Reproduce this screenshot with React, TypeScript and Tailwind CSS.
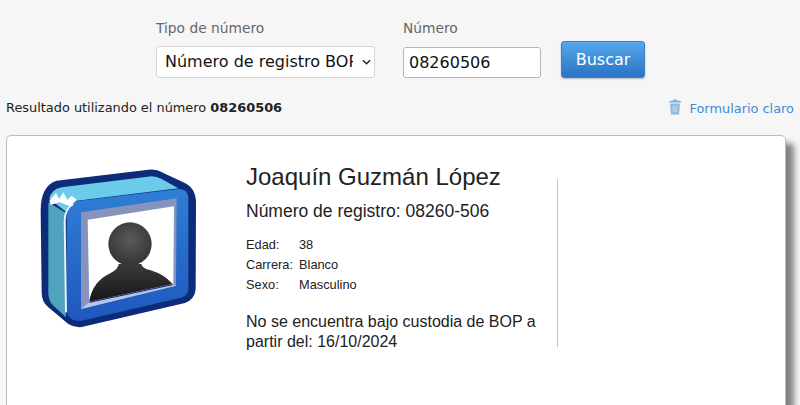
function InmateIcon() {
  return (
    <svg viewBox="0 0 600 600" className="w-[200px] h-[200px] shrink-0">
      <defs>
        <linearGradient id="front" x1="0" y1="0" x2="0" y2="1">
          <stop offset="0" stopColor="#2f7ed6" />
          <stop offset="1" stopColor="#1f58bd" />
        </linearGradient>
        <radialGradient id="head" cx="0.5" cy="0.4" r="0.7">
          <stop offset="0" stopColor="#5a5a5a" />
          <stop offset="1" stopColor="#2e2e2e" />
        </radialGradient>
        <linearGradient id="body" x1="0" y1="0" x2="0" y2="1">
          <stop offset="0" stopColor="#3a3a3a" />
          <stop offset="1" stopColor="#161616" />
        </linearGradient>
      </defs>
      <path
        d="M110 95 L385 62 Q410 60 430 72 L490 100 Q527 115 528 160 L527 420 Q525 450 495 462 L195 532 Q170 540 145 525 L85 475 Q65 460 65 430 L62 185 Q62 110 110 95 Z"
        fill="#0c2b78"
      />
      <path d="M85 160 L135 190 L138 505 L98 468 Q85 455 85 430 Z" fill="#4fa3bd" />
      <path d="M88 150 Q92 122 125 115 L395 82 Q410 82 425 90 L475 118 L170 155 L140 190 Z" fill="#6ccbe8" />
      <path
        d="M140 200 Q145 160 180 155 L475 120 Q505 118 505 150 L505 420 Q505 440 480 447 L185 515 Q150 520 140 490 Z"
        fill="url(#front)"
      />
      <path d="M160 165 Q134 180 134 215 L138 490" stroke="#e4f4fb" strokeWidth="6" fill="none" />
      <path d="M88 155 L108 132 L118 150 L130 130 L142 152 L155 140 L170 152 L150 172 L118 160 L92 168 Z" fill="#ffffff" />
      <path d="M183 190 L470 148 L468 410 L183 480 Z" fill="#8593bd" />
      <path d="M183 480 L208 458 L458 405 L468 410 Z" fill="#b6c6e8" />
      <path d="M203 212 L462 172 L460 405 L208 458 Z" fill="#ffffff" />
      <path
        d="M208 458 Q216 398 272 372 Q295 360 296 345 L364 345 Q366 358 392 364 Q432 376 458 405 Z"
        fill="url(#body)"
      />
      <ellipse cx="330" cy="285" rx="65" ry="65" fill="url(#head)" />
      <path d="M208 460 L458 407" stroke="#0c2b78" strokeWidth="3" />
    </svg>
  );
}

function TrashIcon() {
  return (
    <svg viewBox="0 0 14 16" className="mr-[8px] mb-[4px] h-[16px] w-[14px]">
      <path d="M1 2.2 L5 1.6 L5.4 .6 L8.6 .6 L9 1.6 L13 2.2 L13 3.6 L1 3.6 Z" fill="#7fb0dc" />
      <path d="M2 4.6 L12 4.6 L11 15.4 L3 15.4 Z" fill="#8db8df" />
      <path d="M5 6.5 L5.3 13.5 M7 6.5 L7 13.5 M9 6.5 L8.7 13.5" stroke="#c9dcef" strokeWidth="1" fill="none" />
    </svg>
  );
}

const details = [
  ["Edad:", "38"],
  ["Carrera:", "Blanco"],
  ["Sexo:", "Masculino"],
];

export default function App() {
  return (
    <div className="h-[405px] w-[800px] overflow-hidden bg-[#f6f6f6] font-['DejaVu_Sans',sans-serif]">
      <div className="flex items-end pl-[156px] pt-[19px]">
        <div className="w-[219px]">
          <div className="text-[13.8px] leading-[18px] text-[#666666] mb-[9px]">Tipo de número</div>
          <div className="relative">
            <select
              defaultValue="reg"
              className="block h-[32px] w-[219px] appearance-none rounded-[3px] border border-[#d5d5d5] bg-white pl-[8px] pr-[21px] text-[16px] text-[#111111]"
            >
              <option value="reg">Número de registro BOP</option>
            </select>
            <svg viewBox="0 0 10 6" className="absolute right-[4px] top-[13px] h-[6px] w-[9px]">
              <path d="M1 1 L5 5 L9 1" stroke="#222222" strokeWidth="1.6" fill="none" />
            </svg>
          </div>
        </div>
        <div className="ml-[28px] w-[138px]">
          <div className="text-[13.8px] leading-[18px] text-[#666666] mb-[10px]">Número</div>
          <input
            defaultValue="08260506"
            className="block h-[31px] w-[138px] rounded-[3px] border border-[#b5b5b5] bg-white pl-[5px] text-[16px] text-[#111111]"
          />
        </div>
        <button className="ml-[20px] h-[37px] w-[84px] rounded-[3px] border border-[#3f7fc0] bg-gradient-to-b from-[#55a8ea] to-[#2a73c8] text-[16px] text-white shadow-[0_1px_2px_rgba(0,0,0,0.25)]">
          Buscar
        </button>
      </div>

      <div className="mt-[21px] flex h-[18px] items-center justify-between px-[6px]">
        <span className="text-[12.9px] text-[#222222]">
          Resultado utilizando el número <b>08260506</b>
        </span>
        <span className="mt-[2px] flex items-center text-[12.9px] text-[#3d8ad6]">
          <TrashIcon />
          Formulario claro
        </span>
      </div>

      <div className="ml-[6px] mt-[18px] flex h-[320px] w-[780px] rounded-[5px] border border-[#bbbbbb] bg-white pl-[13px] pt-[13px] shadow-[8px_8px_6px_#808080] font-['Liberation_Sans',sans-serif]">
        <InmateIcon />
        <div className="ml-[26px] w-[311px] pt-[13px] text-[#222222]">
          <h1 className="text-[24px] leading-[30px]">Joaquín Guzmán López</h1>
          <p className="mt-[8px] text-[17.5px] leading-[22px]">Número de registro: 08260-506</p>
          <div className="mt-[13px] text-[12.8px] leading-[20px]">
            {details.map(([k, v]) => (
              <div key={k} className="flex">
                <span className="w-[53px]">{k}</span>
                <span>{v}</span>
              </div>
            ))}
          </div>
          <p className="mt-[17px] w-[300px] text-[16px] leading-[20px]">
            No se encuentra bajo custodia de BOP a partir del: 16/10/2024
          </p>
        </div>
        <div className="mt-[30px] h-[168px] w-px bg-[#c4c4c4]" />
      </div>
    </div>
  );
}
